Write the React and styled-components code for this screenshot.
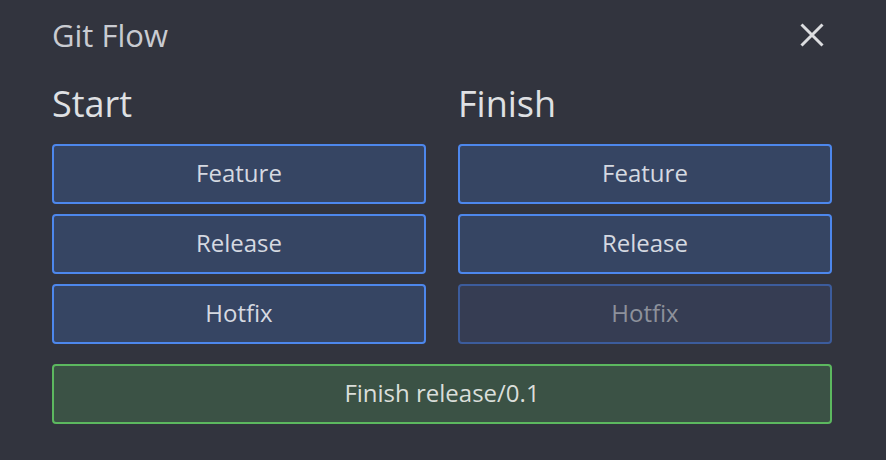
import React from "react";
import styled, { createGlobalStyle } from "styled-components";

const Global = createGlobalStyle`
  html, body { margin: 0; padding: 0; background: #32343e; }
  body { font-family: "Open Sans", "Noto Sans", sans-serif; }
`;

const Panel = styled.div`
  width: 886px;
  height: 460px;
  box-sizing: border-box;
  padding: 15px 54px 0 52px;
  background: #32343e;
`;

const Header = styled.div`
  display: flex;
  align-items: center;
  justify-content: space-between;
  height: 40px;
`;

const Title = styled.h1`
  margin: 0;
  font-size: 31px;
  line-height: 40px;
  font-weight: 400;
  color: #c9cbd1;
`;

const Close = styled.button`
  width: 28px;
  height: 28px;
  padding: 0;
  margin-right: 6px;
  border: none;
  background: none;
  display: flex;
  align-items: center;
  justify-content: center;
  cursor: pointer;
`;

const Columns = styled.div`
  display: grid;
  grid-template-columns: 374px 374px;
  column-gap: 32px;
  margin-top: 27px;
`;

const Column = styled.div`
  display: flex;
  flex-direction: column;
  gap: 10px;
`;

const Heading = styled.h2`
  margin: 0 0 8px;
  font-size: 36px;
  line-height: 44px;
  font-weight: 400;
  color: #dfe0e3;
`;

const Button = styled.button`
  height: 60px;
  width: 100%;
  box-sizing: border-box;
  padding: 0 0 4px;
  border-radius: 4px;
  border: 2px solid ${(p) => (p.$disabled ? "#3c5c9c" : "#4d87ec")};
  background: ${(p) => (p.$disabled ? "#363d53" : "#364563")};
  color: ${(p) => (p.$disabled ? "#8d919b" : "#d5d9e1")};
  font-family: "Open Sans", "Noto Sans", sans-serif;
  font-size: 24px;
  font-weight: 400;
  cursor: ${(p) => (p.$disabled ? "default" : "pointer")};
`;

const FinishButton = styled(Button)`
  margin-top: 20px;
  border-color: #5cb85f;
  background: #3b5245;
  color: #dadeda;
`;

const CloseIcon = () => (
  <svg width="24" height="24" viewBox="0 0 24 24">
    <path d="M1.5 1.5 L22.5 22.5 M22.5 1.5 L1.5 22.5" stroke="#dcdde0" strokeWidth="3" strokeLinecap="butt" />
  </svg>
);

export default function App() {
  return (
    <>
      <Global />
      <Panel>
        <Header>
          <Title>Git Flow</Title>
          <Close aria-label="Close"><CloseIcon /></Close>
        </Header>
        <Columns>
          <Column>
            <Heading>Start</Heading>
            <Button>Feature</Button>
            <Button>Release</Button>
            <Button>Hotfix</Button>
          </Column>
          <Column>
            <Heading>Finish</Heading>
            <Button>Feature</Button>
            <Button>Release</Button>
            <Button $disabled disabled>Hotfix</Button>
          </Column>
        </Columns>
        <FinishButton>Finish release/0.1</FinishButton>
      </Panel>
    </>
  );
}
